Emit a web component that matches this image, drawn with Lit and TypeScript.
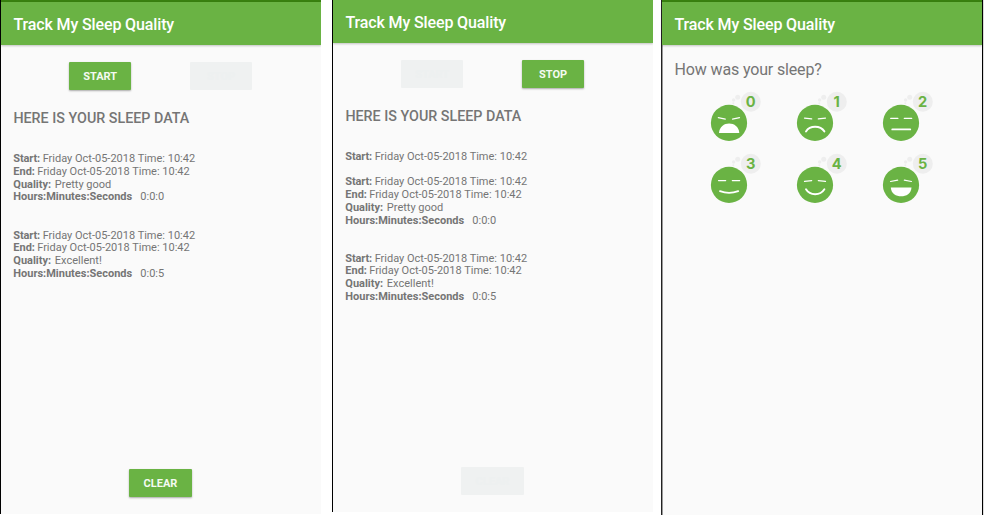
import { LitElement, html, svg, css, nothing } from "lit";
import { customElement, property } from "lit/decorators.js";
import { classMap } from "lit/directives/class-map.js";

interface Night {
  start: string;
  end?: string;
  quality?: string;
  length?: string;
}

const WHEN = "Friday Oct-05-2018 Time: 10:42";
const NIGHTS: Night[] = [
  { start: WHEN, end: WHEN, quality: "Pretty good", length: "0:0:0" },
  { start: WHEN, end: WHEN, quality: "Excellent!", length: "0:0:5" },
];

@customElement("app-header")
class AppHeader extends LitElement {
  @property({ type: Boolean }) statusbar = false;
  static styles = css`
    :host { display: block; position: relative; flex: none; }
    .status { height: 2px; background: #38800f; }
    .bar {
      height: 43px; box-sizing: border-box; padding-left: 12.5px;
      background: #6ab344; color: #fff;
      box-shadow: 0 1px 2px rgba(0, 0, 0, 0.22);
      font: 500 16px/45px Roboto, sans-serif; letter-spacing: -0.13px; white-space: nowrap;
    }
  `;
  render() {
    return html`${this.statusbar ? html`<div class="status"></div>` : nothing}
      <div class="bar">Track My Sleep Quality</div>`;
  }
}

@customElement("app-button")
class AppButton extends LitElement {
  @property() label = "";
  @property({ type: Boolean }) disabled = false;
  static styles = css`
    :host { display: block; }
    .btn {
      display: block; width: 62.4px; height: 28px; padding: 0; border: 0; border-radius: 1px;
      background: #6ab344; color: #f4faf1;
      box-shadow: 0 1px 2px rgba(0, 0, 0, 0.32);
      font: 700 11px/30px Roboto, sans-serif; text-align: center;
    }
    .off { background: #eff1f1; color: #edf0f0; box-shadow: none; }
  `;
  render() {
    return html`<button class=${classMap({ btn: true, off: this.disabled })} ?disabled=${this.disabled}>${this.label}</button>`;
  }
}

@customElement("sleep-tracker")
class SleepTracker extends LitElement {
  @property({ type: Boolean }) running = false;
  static styles = css`
    :host {
      display: flex; flex-direction: column; box-sizing: border-box; width: 321px;
      border-left: 1px solid #000; background: #fafafa; color: #757575;
      font: 11px/12.74px Roboto, sans-serif; overflow: hidden;
    }
    .actions { display: flex; gap: 58.5px; padding: 17.4px 0 0 68px; }
    .title { margin: 17.6px 0 0 12.4px; font: 500 14.3px/20px Roboto, sans-serif; }
    .nights { flex: 1; padding: 25.2px 0 0 12.3px; white-space: pre; }
    .nights.short { padding-top: 24.9px; }
    .night { margin-bottom: 25.4px; }
    .open { margin-bottom: 12.7px; }
    b { font-weight: 700; }
    .tight { letter-spacing: -0.15px; }
    .near { margin-left: -0.5px; }
    .wide { margin-left: 1px; }
    .clear { display: flex; padding: 0 0 16.2px 128.3px; }
    .clear.idle { padding-bottom: 17px; }
  `;
  private night(n: Night) {
    return html`<div class=${classMap({ night: true, open: !n.end })}><div><b class="tight">Start:</b><span> ${n.start}</span></div>${n.end
      ? html`<div><b>End:</b><span class="near"> ${n.end}</span></div><div><b>Quality:</b><span class="wide"> ${n.quality}</span></div><div><b>Hours:Minutes:Seconds</b><span>   ${n.length}</span></div>`
      : nothing}</div>`;
  }
  render() {
    const list = this.running ? [{ start: WHEN }, ...NIGHTS] : NIGHTS;
    return html`
      <app-header ?statusbar=${!this.running}></app-header>
      <div class="actions">
        <app-button label="START" ?disabled=${this.running}></app-button>
        <app-button label="STOP" ?disabled=${!this.running}></app-button>
      </div>
      <div class="title">HERE IS YOUR SLEEP DATA</div>
      <div class=${classMap({ nights: true, short: this.running })}>${list.map((n) => this.night(n))}</div>
      <div class=${classMap({ clear: true, idle: this.running })}>
        <app-button label="CLEAR" ?disabled=${this.running}></app-button>
      </div>`;
  }
}

const FACES = [
  { eyes: "M9.3 26.7l7 1.4M23.5 28.1l7-1.4", mouth: "M10 42C10.6 29.2 29.7 29.2 30.3 42Z", open: true },
  { eyes: "M9.5 27.1l7.2 .8M23.3 27.9l7.2-.8", mouth: "M11 40.4C15 34.2 25.2 34.2 29.4 40.4", open: false },
  { eyes: "M9.7 27.4h7.2M23.3 27.4h7.4", mouth: "M11.3 38.4H29.2", open: false },
  { eyes: "M9.5 27.6h7.2M23.3 27.6h7.4", mouth: "M11 38.2Q20 41.6 29.2 38.2", open: false },
  { eyes: "M9.5 28.4l7.2-.8M23.3 27.6l7.2 .8", mouth: "M11 36.3C15 42.9 25.2 42.9 29.4 36.3", open: false },
  { eyes: "M9.5 28.5l7.2-1.4M23.3 27.1l7.2 1.4", mouth: "M9.8 34.4C10.4 46.3 29.9 46.3 30.5 34.4Z", open: true },
];

@customElement("sleep-quality")
class SleepQuality extends LitElement {
  static styles = css`
    :host {
      display: flex; flex-direction: column; box-sizing: border-box; width: 322px;
      border-left: 1px solid #222; border-right: 1px solid #000;
      box-shadow: inset 1px 0 #999, 1px 0 #ddd;
      background: #fafafa; color: #757575;
    }
    .ask { margin: 15px 0 0 12.6px; font: 400 16px/20px Roboto, sans-serif; letter-spacing: -0.15px; }
    .faces { display: grid; grid-template-columns: repeat(3, 54px); gap: 10px 32px; padding: 11px 0 0 47px; }
    .face { display: block; }
    .head { fill: #6ab344; }
    .bubble { fill: #eeeeee; }
    .line { fill: none; stroke: #fff; stroke-linecap: round; }
    .eyes { stroke-width: 1.2; }
    .mouth { stroke-width: 1.9; }
    .open { fill: #fff; }
    .num { fill: #6ab344; font: 700 14.6px Inter, sans-serif; text-anchor: middle; }
  `;
  render() {
    return html`
      <app-header statusbar></app-header>
      <div class="ask">How was your sleep?</div>
      <div class="faces">
        ${FACES.map(
          (f, i) => html`<svg class="face" width="54" height="52" viewBox="0 0 54 52">
            ${svg`<circle class="bubble" cx="24.3" cy="12.3" r="1"/>
              <circle class="bubble" cx="24.6" cy="9" r="1.7"/>
              <circle class="bubble" cx="28.7" cy="6.2" r="2.5"/>
              <circle class="bubble" cx="41.8" cy="10.8" r="10"/>
              <circle class="head" cx="20" cy="31.9" r="18.1"/>
              <path class="line eyes" d=${f.eyes}/>
              <path class=${f.open ? "open" : "line mouth"} d=${f.mouth}/>
              <text class="num" x="41.7" y="16.2">${i}</text>`}
          </svg>`
        )}
      </div>`;
  }
}

@customElement("app-root")
class AppRoot extends LitElement {
  static styles = css`
    :host { display: flex; width: 987px; height: 517px; background: #fff; overflow: hidden; align-items: flex-start; }
    .first { height: 513.5px; margin-right: 11px; }
    .second { height: 512px; margin-right: 8px; }
    .third { height: 514.5px; }
  `;
  render() {
    return html`<sleep-tracker class="first"></sleep-tracker>
      <sleep-tracker class="second" running></sleep-tracker>
      <sleep-quality class="third"></sleep-quality>`;
  }
}
